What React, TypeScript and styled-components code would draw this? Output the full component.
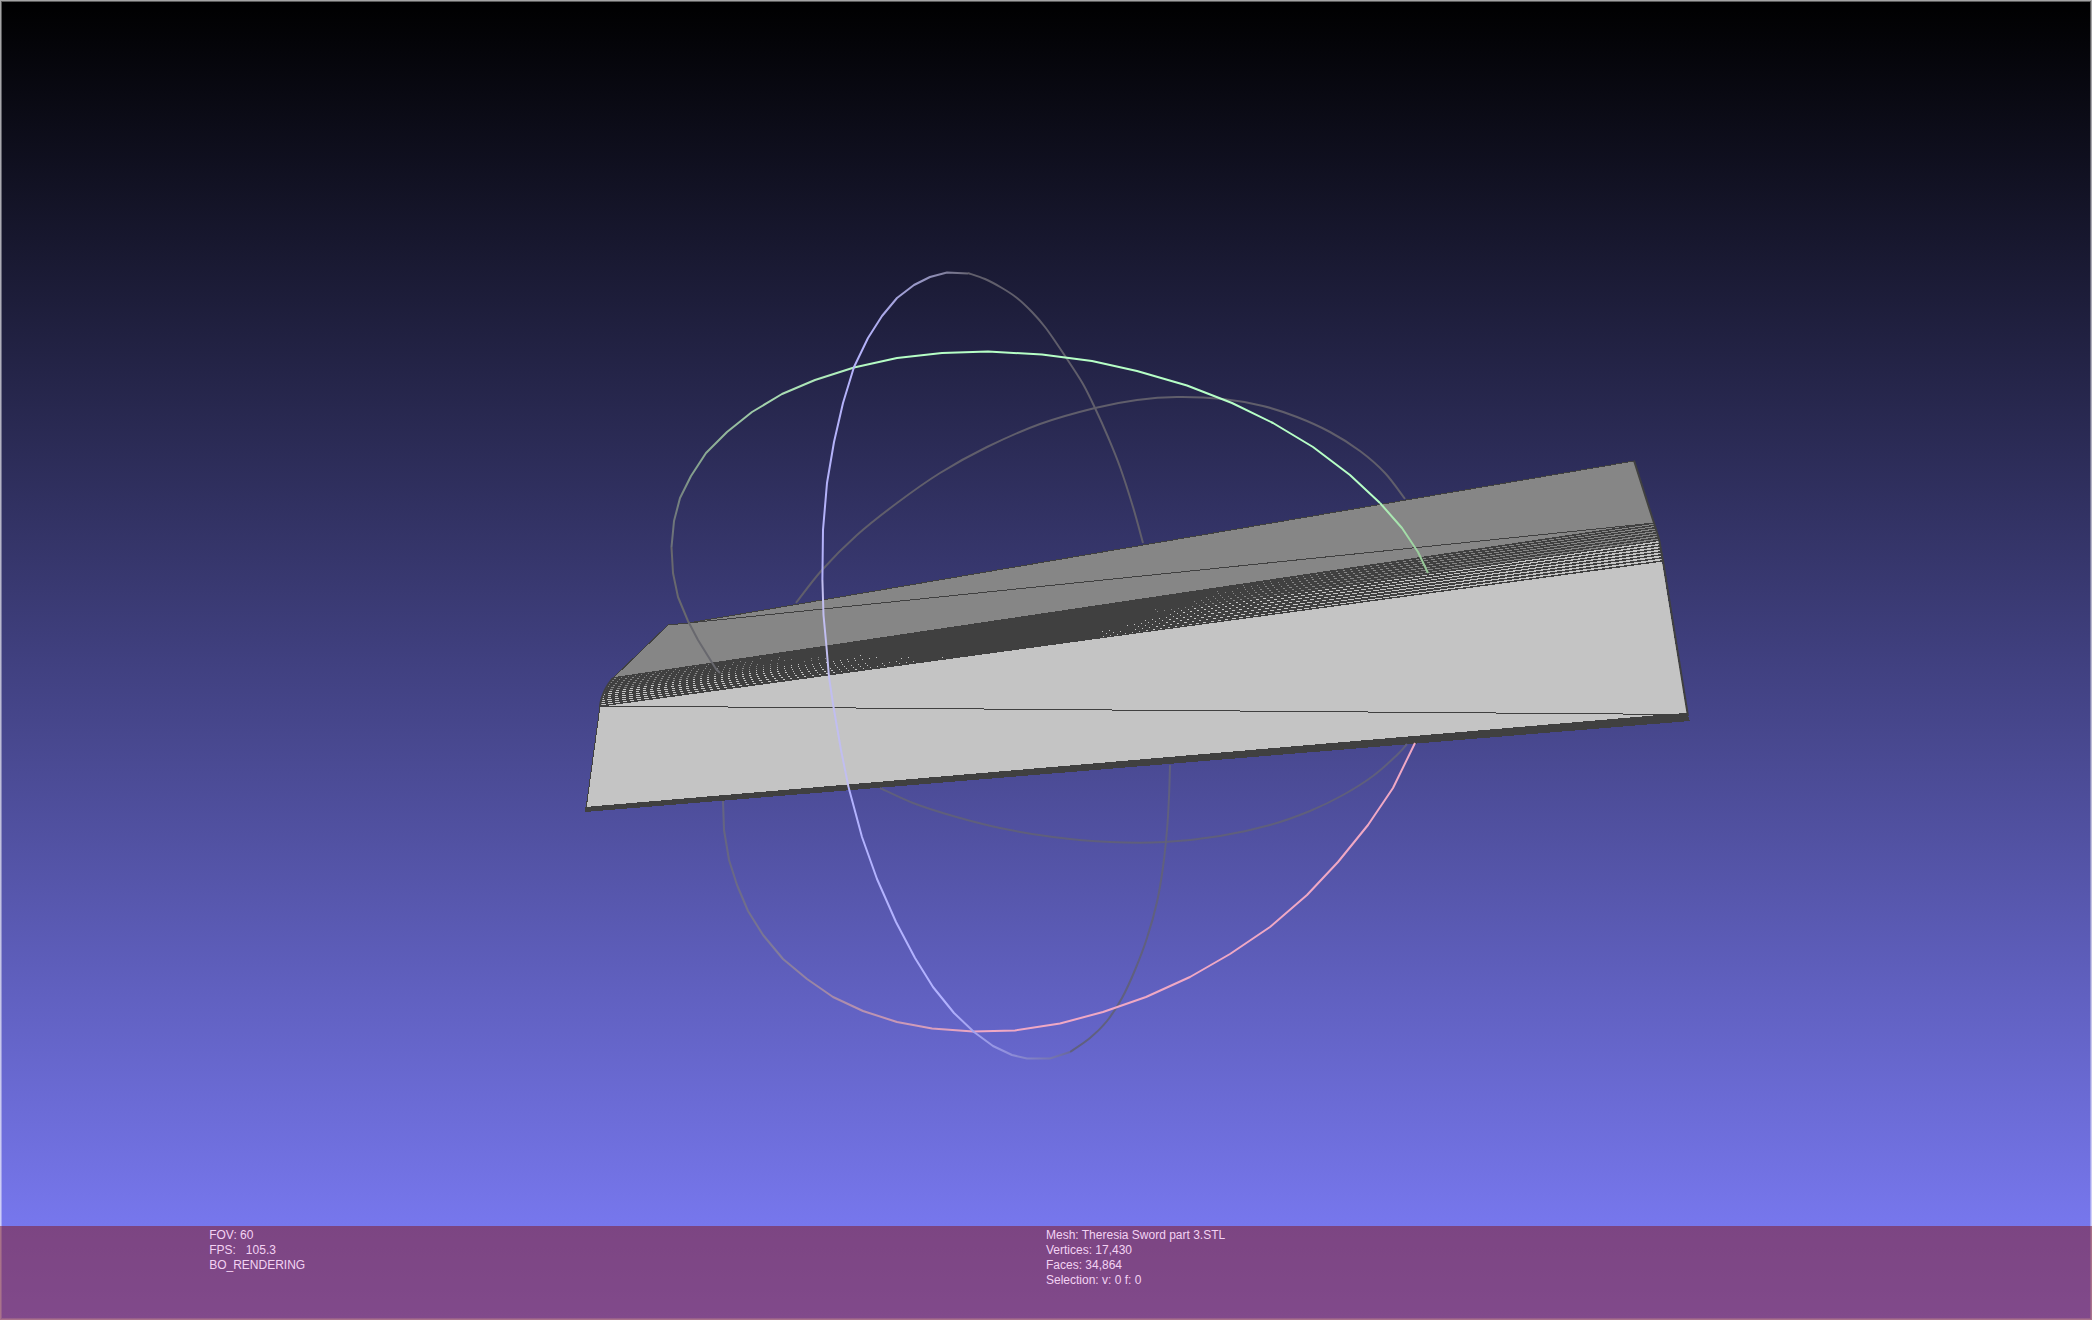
import React from 'react';
import styled, { createGlobalStyle } from 'styled-components';

const GlobalStyle = createGlobalStyle`
  body {
    margin: 0;
    background-color: #000;
  }
`;

const Viewport = styled.main`
  display: grid;
  grid-template: 100vh / 100%;
  overflow: hidden;
  background: linear-gradient(#000, #8080ff);
  font-family: 'Liberation Sans', Arial, sans-serif;
`;

const Scene = styled.svg`
  grid-area: 1 / 1;
  width: 100%;
  height: 100%;
`;

const Frame = styled.div`
  grid-area: 1 / 1;
  box-shadow: inset 0 0 0 1px rgba(255, 255, 255, 0.45), inset 0 0 0 2px rgba(255, 255, 255, 0.35);
`;

const InfoBar = styled.footer`
  grid-area: 1 / 1;
  align-self: end;
  z-index: 1;
  display: grid;
  grid-template-columns: 4fr 5fr;
  box-sizing: border-box;
  min-height: 94px;
  padding: 2px 0 32px 10%;
  background-color: rgba(130, 20, 24, 0.5);
`;

const InfoColumn = styled.div`
  display: flex;
  flex-direction: column;
`;

const InfoLine = styled.span`
  color: #f3d3f3;
  font-size: 12px;
  line-height: 15px;
  white-space: pre;
`;

const Edge = styled.path<{ $width?: number }>`
  fill: none;
  stroke: #404040;
  stroke-width: ${props => props.$width || 1}px;
  shape-rendering: crispEdges;
`;

const Ring = styled.path<{ $color: string }>`
  fill: none;
  stroke: ${props => props.$color};
  stroke-width: 2px;
  stroke-linejoin: round;
`;

type Point = [number, number];

// end points of the rounded edge of the blade, from top to bottom
const STRIPS = 14;

const bezier = (a: Point, b: Point, c: Point, t: number): Point => [
    (1 - t) * (1 - t) * a[0] + 2 * t * (1 - t) * b[0] + t * t * c[0],
    (1 - t) * (1 - t) * a[1] + 2 * t * (1 - t) * b[1] + t * t * c[1],
];

const steps = Array.from({ length: STRIPS + 1 }, (_, i) => i / STRIPS);
const leftEnds = steps.map(t => bezier([613, 678], [602, 691], [600, 706], t));
const rightEnds = steps.map(t => bezier([1654, 523], [1659, 539], [1662, 561], t));

const segment = (a: Point, b: Point) => `M${a[0]} ${a[1]}L${b[0]} ${b[1]}`;

const stripEdges = leftEnds
    .map((p, i) => segment(p, rightEnds[i]) + (i < STRIPS ? segment(leftEnds[i + 1], rightEnds[i]) : ''))
    .join('');

const outline = (points: Point[]) => points.map(p => p.join(',')).join(' ');

// Catmull-Rom curve through all the points
const smooth = (points: Point[]) => {
    let d = `M${points[0].join(' ')}`;
    for (let i = 0; i < points.length - 1; i++) {
        const a = points[i - 1] || points[i];
        const b = points[i];
        const c = points[i + 1];
        const e = points[i + 2] || c;
        d += `C${b[0] + (c[0] - a[0]) / 6} ${b[1] + (c[1] - a[1]) / 6} `;
        d += `${c[0] - (e[0] - b[0]) / 6} ${c[1] - (e[1] - b[1]) / 6} ${c[0]} ${c[1]}`;
    }
    return d;
};

const redFar: Point[] = [
    [796, 603], [822, 570], [857, 535], [897, 503], [940, 473], [987, 447], [1040, 424],
    [1095, 408], [1137, 400], [1177, 397], [1223, 399], [1263, 406], [1297, 417],
    [1330, 432], [1360, 451], [1385, 473], [1405, 499],
];

const blueFarTop: Point[] = [
    [968, 273], [985, 279], [1002, 288], [1017, 298], [1032, 312], [1045, 327], [1057, 344],
    [1069, 362], [1083, 384], [1095, 408], [1108, 437], [1120, 467], [1133, 507], [1143, 543],
];

const greenFar: Point[] = [
    [880, 788], [913, 803], [953, 816], [1000, 828], [1053, 837], [1110, 842], [1165, 842],
    [1220, 836], [1270, 825], [1310, 811], [1343, 795], [1373, 776], [1397, 755], [1407, 744],
];

const blueFarBottom: Point[] = [
    [1170, 765], [1169, 797], [1167, 830], [1163, 867], [1157, 902], [1147, 938],
    [1135, 970], [1122, 998], [1107, 1021], [1090, 1038], [1070, 1052],
];

const Mesh = () => (
    <g>
        <g shapeRendering="crispEdges">
            <polygon
                fill="#868686"
                points={outline([[668, 625], [688, 623], [1634, 461], ...rightEnds, ...[...leftEnds].reverse()])}
            />
            <polygon
                fill="#c4c4c4"
                points={outline([...leftEnds.slice(7), [586, 809], [1687, 714], ...rightEnds.slice(7).reverse()])}
            />
            <polygon fill="#404040" points="585,807 1671,714 1687,713 1690,721 585,812" />
        </g>
        <Edge $width={1.4} d={stripEdges} />
        <Edge d="M688 623L1654 523M600 706L1687 714.5M586 809L600 706" />
        <Edge d="M613 678L668 625L688 623L1634 461" />
        <path
            d={`M600 707L${leftEnds.map(p => p.join(' ')).reverse().join('L')}`}
            fill="none"
            stroke="#404040"
            strokeWidth="2"
        />
        <path
            d="M1634 460.500L1654 523L1659 539L1663 561L1688 716"
            fill="none"
            stroke="#404040"
            strokeWidth="2"
        />
    </g>
);

const Trackball = () => (
    <g>
        <defs>
            <linearGradient id="blueTop" gradientUnits="userSpaceOnUse" x1="865" y1="0" x2="972" y2="0">
                <stop offset="0" stopColor="#b4b2fa" />
                <stop offset="0.6" stopColor="#9291bb" />
                <stop offset="1" stopColor="#65636f" />
            </linearGradient>
            <linearGradient id="blueBottom" gradientUnits="userSpaceOnUse" x1="945" y1="0" x2="1070" y2="0">
                <stop offset="0" stopColor="#b2b2ff" />
                <stop offset="0.5" stopColor="#908fdc" />
                <stop offset="1" stopColor="#69699c" />
            </linearGradient>
            <linearGradient id="green" gradientUnits="userSpaceOnUse" x1="671" y1="0" x2="890" y2="0">
                <stop offset="0" stopColor="#6c7078" />
                <stop offset="0.1" stopColor="#85a08d" />
                <stop offset="0.5" stopColor="#a9dcb2" />
                <stop offset="1" stopColor="#b6ffc6" />
            </linearGradient>
            <linearGradient id="greenEnd" gradientUnits="userSpaceOnUse" x1="1380" y1="503" x2="1428" y2="572">
                <stop offset="0" stopColor="#b0f3ba" />
                <stop offset="1" stopColor="#94c394" />
            </linearGradient>
            <linearGradient id="red" gradientUnits="userSpaceOnUse" x1="723" y1="0" x2="980" y2="0">
                <stop offset="0" stopColor="#646480" />
                <stop offset="0.2" stopColor="#807b9a" />
                <stop offset="0.5" stopColor="#b28fae" />
                <stop offset="1" stopColor="#f0a8c4" />
            </linearGradient>
        </defs>

        {/* far halves of the rings */}
        <Ring $color="#605e6b" d={smooth(redFar)} />
        <Ring $color="#605e6b" d={smooth(blueFarTop)} />
        <Ring $color="#5f5f7c" d={smooth(greenFar)} />
        <Ring $color="#60607e" d={smooth(blueFarBottom)} />
        <Ring $color="#68686e" d="M720 673L716 669L698 640L688 621L678 597L673 573L671.500 547" />

        {/* near halves */}
        <Ring
            $color="url(#green)"
            d="M671.500 547L674 521L680 498L691 476L706 453L727 432L752 412L782 394L815 380L854 367.500L897 358L942 353L988 351.500L1042 354.500L1092 361L1137 371L1187 385.500L1232 403L1273 423L1313 447L1350 475L1380 503"
        />
        <Ring $color="url(#greenEnd)" d="M1380 503L1402 528L1418 552L1428 573" />
        <Ring
            $color="url(#red)"
            d="M723 801L724 830L729 860L737 885L748 911L763 935L783 959L807 979L833 997L863 1011L897 1022L932 1028.500L973 1031.500L1015 1030.500L1060 1023.500L1103 1012L1146 997L1190 977L1230 954L1270 927L1307 895L1338 862L1368 825L1393 788L1415 743"
        />
        <Ring
            $color="url(#blueTop)"
            d="M968 273.500L947 272.500L930 277L914 285L897 298L882 316L868 338L854 367L843 403L834 442L827 483L823 530L822.400 580"
        />
        <Ring
            $color="#c1bef0"
            d="M822.400 580L823.500 615L826.500 647L829 677L833.500 707L841 750L848.500 787"
        />
        <Ring
            $color="url(#blueBottom)"
            d="M848.500 787L862 837L877 879L896 922L915 958L933 987L954 1013L974 1032L993 1046L1012 1055L1027 1058.500L1050 1058.500L1070 1052"
        />
    </g>
);

const App = () => {
    return (
        <>
            <GlobalStyle />
            <Viewport>
                <Scene viewBox="0 0 2092 1320" aria-hidden="true">
                    <Mesh />
                    <Trackball />
                </Scene>
                <Frame />
                <InfoBar>
                    <InfoColumn>
                        <InfoLine>FOV: 60</InfoLine>
                        <InfoLine>{'FPS:   105.3'}</InfoLine>
                        <InfoLine>BO_RENDERING</InfoLine>
                    </InfoColumn>
                    <InfoColumn>
                        <InfoLine>Mesh: Theresia Sword part 3.STL</InfoLine>
                        <InfoLine>Vertices: 17,430</InfoLine>
                        <InfoLine>Faces: 34,864</InfoLine>
                        <InfoLine>Selection: v: 0 f: 0</InfoLine>
                    </InfoColumn>
                </InfoBar>
            </Viewport>
        </>
    );
};

export default App;
